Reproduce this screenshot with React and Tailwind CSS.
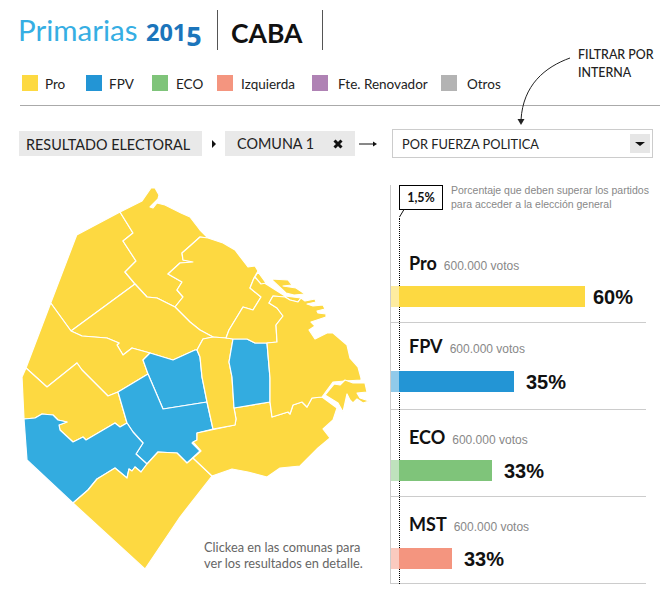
const SANS = 'font-["Lato",sans-serif]';

const LEGEND = [
  { label: 'Pro', color: 'bg-[#fdd941]', width: 'w-[64px]', gap: 'mr-[7px]' },
  { label: 'FPV', color: 'bg-[#2395d5]', width: 'w-[66px]', gap: 'mr-[7px]' },
  { label: 'ECO', color: 'bg-[#7fc47a]', width: 'w-[65px]', gap: 'mr-[8px]' },
  { label: 'Izquierda', color: 'bg-[#f4957f]', width: 'w-[95px]', gap: 'mr-[8px]' },
  { label: 'Fte. Renovador', color: 'bg-[#af82b4]', width: 'w-[129px]', gap: 'mr-[10px]' },
  { label: 'Otros', color: 'bg-[#b3b3b3]', width: 'w-[60px]', gap: 'mr-[10px]' },
];

const RESULTS = [
  { name: 'Pro', votes: '600.000 votos', pct: '60%', bar: 194, color: 'bg-[#fdd941]', pad: 'pt-[15px]', gap: 'mt-[6px]', pctGap: 'ml-[8px]' },
  { name: 'FPV', votes: '600.000 votos', pct: '35%', bar: 123, color: 'bg-[#2395d5]', pad: 'pt-[11px]', gap: 'mt-[8px]', pctGap: 'ml-[12px]' },
  { name: 'ECO', votes: '600.000 votos', pct: '33%', bar: 101, color: 'bg-[#7fc47a]', pad: 'pt-[15px]', gap: 'mt-[6px]', pctGap: 'ml-[12px]' },
  { name: 'MST', votes: '600.000 votos', pct: '33%', bar: 61, color: 'bg-[#f4957f]', pad: 'pt-[15px]', gap: 'mt-[7px]', pctGap: 'ml-[12px]' },
];

const YELLOW = '#fdd941';
const BLUE = '#33ace0';

// Comunas, traced in page coordinates
const COMUNAS = [
  { fill: YELLOW, d: '120,212 76.7,235 50.7,303 71,331 135,284 125,272 136,261 123,241 133,233' },
  { fill: YELLOW, d: '120,212 133,233 123,241 136,261 125,272 135,284 147,297 157,298 175,307 183,297 177,290 182,282 168,274 180,263 193,262 183,260 182,253 190,246 200,237 208,238 200,230 190,217 181,213 165,205 157,203 153,208 150,207 158,199 159,195 155,188 151,188 142,201' },
  { fill: YELLOW, d: '208,238 200,237 190,246 182,253 183,260 193,262 180,263 168,274 182,282 177,290 183,297 175,307 190,322 200,330 213,337 226,338 229,330 243,307 253,310 261,297 250,288 254,278 258,271 255,266 248,267 235,250 223,243' },
  { fill: YELLOW, d: '135,284 147,297 157,298 175,307 190,322 200,330 213,337 203,339 197,350 195,350 173,360 150,353 132,348 123,355 117,345 119,343 107,338 82,336 71,331' },
  { fill: YELLOW, d: '50.7,303 71,331 82,336 107,338 119,343 117,345 123,355 132,348 150,353 143,360 148,374 118,392 108,396 82,370 77,363 47,387 26,368' },
  { fill: YELLOW, d: '26,368 22,377 24,419 35,418 42,414 53,415 58,420 67,422 59,425 60,430 73,442 83,437 86,440 115,423 120,427 127,423 118,392 108,396 82,370 77,363 47,387' },
  { fill: BLUE, d: '143,360 150,353 173,360 195,350 197,350 200,357 202,377 207,402 163,409 148,374' },
  { fill: BLUE, d: '118,392 148,374 163,409 207,402 213,429 197,433 197,440 192,443 200,451 187,463 177,453 158,452 147,464 136,454 143,443 133,432 127,423' },
  { fill: BLUE, d: '24,419 35,418 42,414 53,415 58,420 67,422 59,425 60,430 73,442 83,437 86,440 115,423 120,427 127,423 133,432 143,443 136,454 147,464 141,472 135,467 132,471 129,469 127,478 115,468 97,479 88,490 73,503 27,460' },
  { fill: YELLOW, d: '73,503 88,490 97,479 115,468 127,478 129,469 132,471 135,467 141,472 147,464 158,452 177,453 187,463 193,458 212,476 180,517 145,569' },
  { fill: YELLOW, d: '193,458 201,451 193,442 197,440 197,433 235,425 236,419 234,408 270,402 272,417 288,412 290,414 293,405 302,402 307,407 312,398 322,397 337,408 333,420 323,429 330,438 318,448 307,459 300,466 280,468 267,477 248,472 232,469 212,476' },
  { fill: YELLOW, d: '197,350 203,339 213,337 226,338 233,339 229,362 232,377 234,408 236,419 235,425 213,429 207,402 202,377 200,357' },
  { fill: BLUE, d: '233,339 247,339 255,343 267,343 270,378 270,402 234,408 232,377 229,362' },
  { fill: YELLOW, d: '250,288 261,297 253,310 243,307 229,330 226,338 233,339 247,339 255,343 267,343 277,342 276,325 283,316 277,308 269,303 273,296 285,297 290,300 298,302 301,298 285,296 266,284 257,278 254,278' },
  { fill: YELLOW, d: '267,343 277,342 276,325 283,316 277,308 269,303 273,296 285,297 290,300 298,302 301,298 305,301 315,299 316,302 307,304 313,306 323,305 325,309 317,311 318,313 326,314 326,317 311,322 315,326 309,330 315,339 327,333 333,333 347,345 350,358 358,367 361,378 361,380 345,381 333,382 322,397 312,398 307,407 302,402 293,405 290,414 288,412 272,417 270,402 270,378' },
  { fill: YELLOW, d: '271,279 288,280 292,285 283,286 296,288 305,294 294,295 286,293' },
  { fill: YELLOW, d: '258,272 266,283 261,284 255,277' },
  { fill: YELLOW, d: '334,384 340,385 345,380 353,383 365,383 367,392 357,393 360,398 369,401 363,403 357,399 353,403 350,400 347,394 343,412 338,403 325,395' },
];

function CabaMap() {
  return (
    <svg width="390" height="400" viewBox="0 185 390 400" className="block">
      {COMUNAS.map((c, i) => (
        <polygon key={i} points={c.d} fill={c.fill} stroke="#fff" strokeWidth="1.2" strokeLinejoin="round" />
      ))}
    </svg>
  );
}

function ResultRow({ row }) {
  return (
    <div className={`h-[87px] border-b border-[#ccc] w-[255px] flex flex-col ${row.pad}`}>
      <div className="flex items-baseline pl-[18px]">
        <span className="text-[18px] leading-[24px] font-bold text-[#111]">{row.name}</span>
        <span className='font-["Liberation_Sans",sans-serif] text-[12px] text-[#888] ml-[7px]'>{row.votes}</span>
      </div>
      <div className={`flex items-center ${row.gap}`}>
        <div className={`${row.color} h-[21px] relative`} style={{ width: row.bar }}>
          <div className="absolute left-0 top-0 h-full w-[8px] bg-white/50" />
        </div>
        <span className={`font-["Liberation_Sans",sans-serif] text-[20px] font-bold text-[#111] translate-y-[1px] ${row.pctGap}`}>{row.pct}</span>
      </div>
    </div>
  );
}

export default function App() {
  return (
    <div className={`${SANS} relative w-[667px] h-[599px] bg-white overflow-hidden text-[#222]`}>
      {/* Header */}
      <div className="flex items-center h-[40px] mt-[10px] ml-[18px]">
        <div className="w-[199px] text-[29.5px] leading-[40px] pt-[6px] whitespace-nowrap">
          <span className="text-[#36aee3]">Primarias </span>
          {/* no installed font has old-style figures, so the digits are sized by hand */}
          <span className='font-["Noto_Sans",sans-serif] text-[#1b75bb] font-bold ml-[1px]'>
            <span className="text-[23.5px]">201</span>
            <span className="text-[27px] align-[-5px]">5</span>
          </span>
        </div>
        <div className="border-l border-[#555] h-[40px] w-[105px] pl-[13px] pt-[3px]">
          <span className="text-[26.5px] leading-[40px] font-bold text-[#111]">CABA</span>
        </div>
        <div className="border-l border-[#555] h-[40px]" />
      </div>

      {/* Legend */}
      <div className="flex items-center h-[17px] mt-[24px] ml-[22px]">
        {LEGEND.map((item) => (
          <div key={item.label} className={`flex items-center ${item.width}`}>
            <span className={`${item.color} w-[16px] h-[16px] shrink-0 ${item.gap}`} />
            <span className="text-[13.5px] whitespace-nowrap pt-[3px]">{item.label}</span>
          </div>
        ))}
      </div>
      <div className="border-b border-[#aaa] ml-[20px] w-[640px] mt-[14px]" />

      {/* Filter bar */}
      <div className="flex items-center ml-[19px] mt-[23px] h-[29px]">
        <div className="bg-[#e9e9e9] w-[183px] h-[25px] pl-[7px] text-[14.4px] leading-[27px] whitespace-nowrap">RESULTADO ELECTORAL</div>
        <div className="w-[23px] flex justify-center">
          <span className="border-y-[4px] border-l-[4px] border-y-transparent border-l-[#111]" />
        </div>
        <div className="bg-[#e9e9e9] w-[130px] h-[25px] pl-[12px] pr-[12px] text-[14.4px] leading-[27px] flex justify-between items-center">
          <span className="whitespace-nowrap">COMUNA 1</span>
          <svg width="10" height="10" viewBox="0 0 10 10"><path d="M1.5 1.5l7 7M8.5 1.5l-7 7" stroke="#111" strokeWidth="3" /></svg>
        </div>
        <svg width="37" height="10" viewBox="0 0 37 10" className="shrink-0">
          <path d="M4 5h16" stroke="#111" strokeWidth="1" />
          <path d="M18 2.5l4 2.5-4 2.5z" fill="#111" />
        </svg>
        <div className="border border-[#ccc] w-[261px] h-[29px] flex items-center justify-between pl-[9px] pr-[2px]">
          <span className="text-[12.8px] whitespace-nowrap pt-[3px]">POR FUERZA POLITICA</span>
          <div className="bg-[#e6e6e6] w-[20px] h-[19px] flex items-center justify-center">
            <span className="border-x-[5px] border-t-[4px] border-x-transparent border-t-[#111]" />
          </div>
        </div>
      </div>

      {/* Filter hint */}
      <div className="absolute left-[578px] top-[46px] text-[12.4px] leading-[18px] font-medium text-[#222] whitespace-nowrap">
        FILTRAR POR<br />INTERNA
      </div>
      <svg width="60" height="75" viewBox="0 0 60 75" className="absolute left-[515px] top-[50px]">
        <path d="M55 8C30 17 8 35 6 70" fill="none" stroke="#222" strokeWidth="1" />
        <path d="M2.5 69l3.5 6 3.5-6z" fill="#222" />
      </svg>

      {/* Body */}
      <div className="flex mt-[27px]">
        <div className="w-[390px] relative h-[400px] shrink-0">
          <CabaMap />
          <div className="absolute left-[204px] top-[354px] text-[12.8px] leading-[16px] text-[#666] whitespace-nowrap">
            Clickea en las comunas para<br />ver los resultados en detalle.
          </div>
        </div>

        <div className="relative border-l border-[#ccc] h-[399px] w-[270px]">
          {/* 1,5% threshold */}
          <div className="absolute left-[8px] top-[33px] bottom-0 border-l border-dotted border-black" />
          <div className="h-[51px] relative">
            <div className="absolute left-[8px] top-0 w-[44px] h-[25px] border border-black bg-white text-[12.5px] font-bold leading-[23px] text-center text-[#111]">1,5%</div>
            <svg width="6" height="9" viewBox="0 0 6 9" className="absolute left-[8px] top-[24px]">
              <path d="M0.5 8L5 0.5" stroke="#111" strokeWidth="1" fill="none" />
            </svg>
            <div className='absolute left-[60px] top-[-2px] font-["Liberation_Sans",sans-serif] text-[10.5px] leading-[14px] text-[#888] whitespace-nowrap'>
              Porcentaje que deben superar los partidos<br />para acceder a la elección general
            </div>
          </div>
          {RESULTS.map((row) => (
            <ResultRow key={row.name} row={row} />
          ))}
        </div>
      </div>
    </div>
  );
}
